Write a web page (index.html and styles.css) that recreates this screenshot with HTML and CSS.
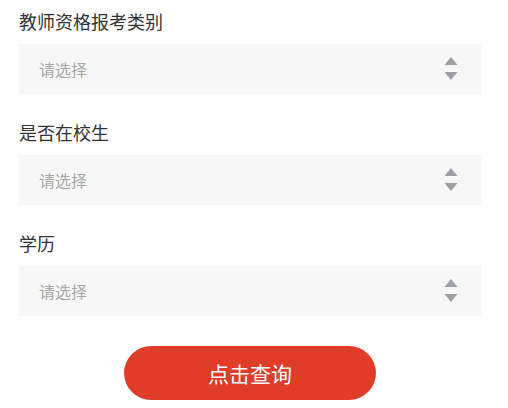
FILE: index.html
```html
<!DOCTYPE html>
<html lang="zh-CN">
<head>
    <meta charset="UTF-8">
    <meta name="viewport" content="width=device-width, initial-scale=1.0">
    <title>教师资格查询</title>
    <link rel="stylesheet" href="styles.css">
</head>
<body>
    <form class="query-form">
        <div class="form-group">
            <div class="form-label">教师资格报考类别</div>
            <div class="form-select">
                <span class="placeholder">请选择</span>
                <svg class="select-arrow" width="14" height="24" viewBox="0 0 14 24">
                    <polygon points="7,0 13.5,8 0.5,8" />
                    <polygon points="0.5,15 13.5,15 7,23" />
                </svg>
            </div>
        </div>

        <div class="form-group">
            <div class="form-label">是否在校生</div>
            <div class="form-select">
                <span class="placeholder">请选择</span>
                <svg class="select-arrow" width="14" height="24" viewBox="0 0 14 24">
                    <polygon points="7,0 13.5,8 0.5,8" />
                    <polygon points="0.5,15 13.5,15 7,23" />
                </svg>
            </div>
        </div>

        <div class="form-group">
            <div class="form-label">学历</div>
            <div class="form-select">
                <span class="placeholder">请选择</span>
                <svg class="select-arrow" width="14" height="24" viewBox="0 0 14 24">
                    <polygon points="7,0 13.5,8 0.5,8" />
                    <polygon points="0.5,15 13.5,15 7,23" />
                </svg>
            </div>
        </div>

        <div class="form-actions">
            <button type="button" class="query-button">点击查询</button>
        </div>
    </form>
</body>
</html>
```

FILE: styles.css
```css
* {
    margin: 0;
    padding: 0;
    box-sizing: border-box;
}

body {
    font-family: 'Noto Sans CJK SC', 'Noto Sans', sans-serif;
    background: #ffffff;
    color: #333333;
}

.query-form {
    padding: 0 27px 0 19px;
}

.form-group {
    margin-bottom: 17px;
}

.form-label {
    padding-top: 10px;
    margin-bottom: 12px;
    font-size: 18px;
    line-height: 22px;
    color: #333333;
}

.form-select {
    height: 50px;
    background: #f7f7f7;
    display: flex;
    align-items: center;
    justify-content: space-between;
    padding: 0 23px 0 20px;
}

.placeholder {
    font-size: 16px;
    color: #a8a8a8;
}

.select-arrow {
    fill: #9aa0a6;
}

.form-actions {
    margin-top: 30px;
    display: flex;
    justify-content: center;
}

.query-button {
    width: 252px;
    height: 54px;
    border: none;
    border-radius: 27px;
    background: #e03c2a;
    color: #ffffff;
    font-family: 'Noto Sans CJK SC', 'Noto Sans', sans-serif;
    font-size: 21px;
    cursor: pointer;
}
```
